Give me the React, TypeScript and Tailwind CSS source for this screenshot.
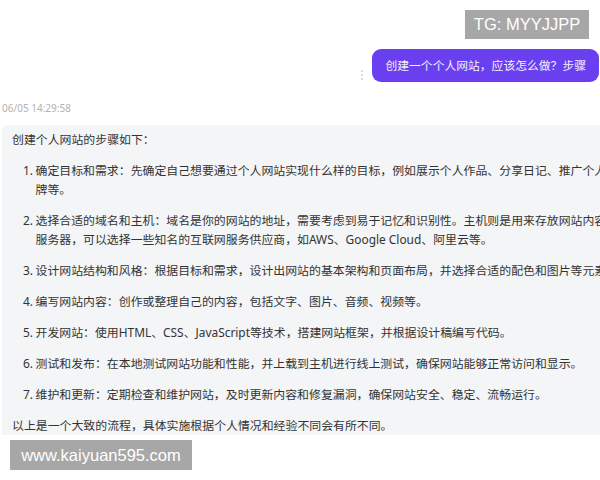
import React from "react";

const steps: string[][] = [
  [
    "确定目标和需求：先确定自己想要通过个人网站实现什么样的目标，例如展示个人作品、分享日记、推广个人品",
    "牌等。",
  ],
  [
    "选择合适的域名和主机：域名是你的网站的地址，需要考虑到易于记忆和识别性。主机则是用来存放网站内容的",
    "服务器，可以选择一些知名的互联网服务供应商，如AWS、Google Cloud、阿里云等。",
  ],
  ["设计网站结构和风格：根据目标和需求，设计出网站的基本架构和页面布局，并选择合适的配色和图片等元素。"],
  ["编写网站内容：创作或整理自己的内容，包括文字、图片、音频、视频等。"],
  ["开发网站：使用HTML、CSS、JavaScript等技术，搭建网站框架，并根据设计稿编写代码。"],
  ["测试和发布：在本地测试网站功能和性能，并上载到主机进行线上测试，确保网站能够正常访问和显示。"],
  ["维护和更新：定期检查和维护网站，及时更新内容和修复漏洞，确保网站安全、稳定、流畅运行。"],
];

function Watermark({ text }: { text: string }) {
  return (
    <div className="flex h-full items-center justify-center whitespace-nowrap bg-[#a7a7a7] font-['Liberation_Sans',Arial,sans-serif] text-[16.5px] leading-none text-white">
      {text}
    </div>
  );
}

export default function App() {
  return (
    <div className="h-[480px] w-[600px] overflow-hidden bg-white font-['Noto_Sans','Noto_Sans_CJK_SC',sans-serif]">
      {/* top watermark */}
      <div className="flex justify-end pr-[11px] pt-[10px]">
        <div className="h-[29px] w-[124px]">
          <Watermark text="TG: MYYJJPP" />
        </div>
      </div>

      {/* user message */}
      <div className="mt-[10px] flex justify-end pr-[1px]">
        <div className="mb-[2px] mr-[9px] flex flex-col gap-[2px] self-end">
          <span className="h-[2px] w-[2px] rounded-full bg-[#cfcfcf]" />
          <span className="h-[2px] w-[2px] rounded-full bg-[#cfcfcf]" />
          <span className="h-[2px] w-[2px] rounded-full bg-[#cfcfcf]" />
        </div>
        <div className="flex h-[33px] items-center whitespace-nowrap rounded-[9px] bg-[#6a3ff0] px-[13px] text-[11.8px] text-[#f4f0ff]">
          创建一个个人网站，应该怎么做？步骤
        </div>
      </div>

      {/* timestamp */}
      <div className="mt-[19px] pl-[2px] text-[10px] leading-[14px] text-[#b2b2b2]">06/05 14:29:58</div>

      {/* answer */}
      <div className="ml-[2px] mt-[10px] w-[700px] rounded-tl-[6px] bg-[#f4f5f7] pl-[10px] pt-[5px] text-[11.9px] leading-[19px] text-[#333333]">
        <p className="whitespace-nowrap">创建个人网站的步骤如下：</p>
        {steps.map((lines, i) => (
          <div key={i} className="mt-[12px] flex whitespace-nowrap pl-[11px]">
            <span className="w-[12.5px] shrink-0">{i + 1}.</span>
            <div>
              {lines.map((line, j) => (
                <p key={j}>{line}</p>
              ))}
            </div>
          </div>
        ))}
        <p className="mt-[12px] whitespace-nowrap">以上是一个大致的流程，具体实施根据个人情况和经验不同会有所不同。</p>
      </div>

      {/* bottom watermark */}
      <div className="ml-[10px] mt-[5px] h-[30px] w-[182px]">
        <Watermark text="www.kaiyuan595.com" />
      </div>
    </div>
  );
}
